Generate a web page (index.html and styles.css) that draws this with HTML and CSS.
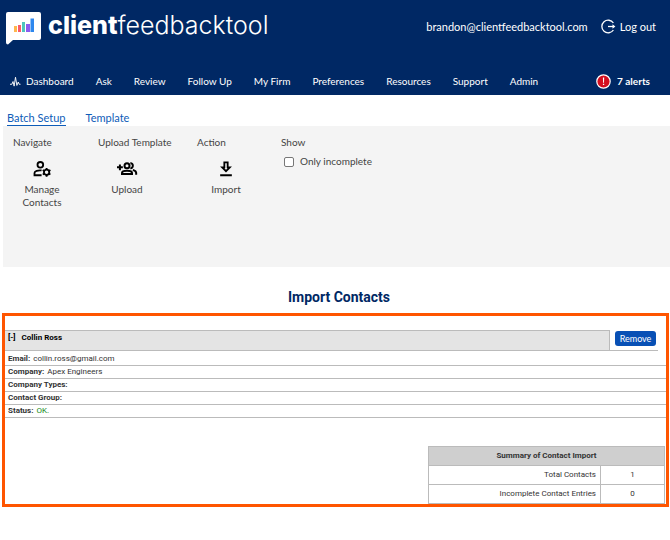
FILE: index.html
```html
<!DOCTYPE html>
<html lang="en">
<head>
<meta charset="utf-8">
<title>Import Contacts</title>
<link rel="stylesheet" href="styles.css">
</head>
<body>
<header class="site-header">
  <div class="top">
    <a class="brand" href="#">
      <svg class="brand-mark" viewBox="0 0 36 34" aria-hidden="true">
        <path fill="#fff" d="M2 1h31q2 0 2 2v24q0 2-2 2H7l-5 4.500q-2 0-2-2V3q0-2 2-2z"/>
        <path fill="#ffb64d" d="M8 15h3v6H8z"/><path fill="#fb5a68" d="M12 14h3v7h-3z"/><path fill="#4fc5bd" d="M16 11h3v10h-3z"/><path fill="#8a5cf0" d="M20 13h4v8h-4z"/><path fill="#2d87ee" d="M24.500 7.500H28V21h-3.500z"/>
      </svg>
      <span class="brand-name"><b>client</b>feedbacktool</span>
    </a>
    <div class="account">
      <span>brandon@clientfeedbacktool.com</span>
      <a class="logout" href="#">
        <svg width="15" height="15" viewBox="0 0 15 15" fill="none" stroke="#fff" stroke-width="1.3" aria-hidden="true"><path d="M12.4 4A6.3 6.3 0 1 0 12.4 11"/><path d="M7 7.5h6"/><path fill="#fff" stroke="none" d="M11.5 5.3 14.4 7.5 11.5 9.7z"/></svg>
        Log out
      </a>
    </div>
  </div>
  <nav class="nav">
    <a class="dash" href="#"><svg width="11" height="12" viewBox="0 0 12 12" fill="none" stroke="#fff" aria-hidden="true"><path d="M0 8.5h2l1.3-3L4.500 10.500 6 .8l1.500 9L9 6l1 2.500h1.500"/></svg>Dashboard</a>
    <a href="#">Ask</a><a href="#">Review</a><a href="#">Follow Up</a><a href="#">My Firm</a><a href="#">Preferences</a><a href="#">Resources</a><a href="#">Support</a><a href="#">Admin</a>
    <a class="alerts" href="#"><svg width="15" height="15" viewBox="0 0 15 15" aria-hidden="true"><circle cx="7.500" cy="7.500" r="6.700" fill="#d40f20" stroke="#fff" stroke-width="1.200"/><path fill="#fff" d="M6.900 3.500h1.300L8 8.700h-.9zM6.900 9.800h1.300V11H6.900z"/></svg>7 alerts</a>
  </nav>
</header>
<main>
  <div class="tabs"><a class="current" href="#">Batch Setup</a><a href="#">Template</a></div>
  <section class="ribbon">
    <div class="group navigate"><h2>Navigate</h2>
      <a class="tool" href="#">
        <svg width="20" height="20" viewBox="0 0 24 24" fill="none" stroke="#000" stroke-width="2.200" aria-hidden="true"><circle cx="10" cy="7" r="3.400"/><path d="M11.500 19.500H3v-2.700C3 14.500 7 13.200 11.500 13.700"/><circle cx="17.500" cy="16" r="3.200"/><path d="M17.500 10.700v2M17.500 19.300v2M12.900 13.300l1.700 1M20.400 17.700l1.700 1M12.900 18.700l1.700-1M20.400 14.300l1.700-1"/></svg>
        Manage Contacts</a></div>
    <div class="group upload"><h2>Upload Template</h2>
      <a class="tool" href="#">
        <svg width="22" height="20" viewBox="0 0 26 24" fill="none" stroke="#000" stroke-width="2.400" aria-hidden="true"><path d="M1 10h7M4.500 6.500v7"/><circle cx="13" cy="8" r="3"/><path d="M7 18v-1.300c0-3.600 12-3.600 12 0V18zM17 5c4-.5 4 6.500 0 6M20 13c2.500.8 4 2 4 3.500V19"/></svg>
        Upload</a></div>
    <div class="group action"><h2>Action</h2>
      <a class="tool" href="#">
        <svg width="20" height="20" viewBox="0 0 24 24" fill="none" stroke="#000" stroke-width="2.200" aria-hidden="true"><path d="M10 4h4v6h2.500L12 14.500 7.500 10H10zM5 19.500h14"/></svg>
        Import</a></div>
    <div class="group"><h2>Show</h2>
      <label class="check"><input type="checkbox">Only incomplete</label></div>
  </section>
  <h1>Import Contacts</h1>
  <section class="results">
    <div class="contact-head">
      <div class="contact-name"><a href="#">[-]</a><span>Collin Ross</span></div>
      <div class="contact-action"><button type="button">Remove</button></div>
    </div>
    <dl class="details">
      <div class="email"><dt>Email:</dt><dd>collin.ross@gmail.com</dd></div>
      <div><dt>Company:</dt><dd>Apex Engineers</dd></div>
      <div><dt>Company Types:</dt><dd></dd></div>
      <div><dt>Contact Group:</dt><dd></dd></div>
      <div><dt>Status:</dt><dd class="ok">OK.</dd></div>
    </dl>
    <table class="summary">
      <thead><tr><th colspan="2">Summary of Contact Import</th></tr></thead>
      <tbody>
        <tr><td>Total Contacts</td><td class="count">1</td></tr>
        <tr><td>Incomplete Contact Entries</td><td class="count">0</td></tr>
      </tbody>
    </table>
  </section>
</main>
</body>
</html>
```
FILE: styles.css
```css
* { box-sizing: border-box; }
body { margin: 0; background: #fff; color: #444; font: 10px/13px Lato, "Noto Sans", sans-serif; }
a { color: inherit; text-decoration: none; }
svg { flex: none; }
.site-header { height: 95px; background: #002864; color: #fff; }
.top { display: flex; justify-content: space-between; height: 68px; padding: 11px 14px 0 6px; }
.brand { display: flex; align-items: flex-start; gap: 6px; }
.brand-mark { width: 36px; height: 34px; }
.brand-name { font: 300 25px/28px Inter, sans-serif; }
.brand-name b { font-weight: 800; }
.account { display: flex; align-items: center; gap: 13px; height: 30px; font-size: 11px; }
.logout { display: flex; align-items: center; gap: 4px; }
.nav { display: flex; align-items: center; gap: 22px; height: 27px; padding: 0 20px 0 10px; white-space: nowrap; }
.dash { display: flex; align-items: center; gap: 5px; }
.alerts { display: flex; align-items: center; gap: 6px; margin-left: auto; font-weight: 700; }
.tabs { display: flex; gap: 20px; padding: 16px 7px 0; color: #0e5cb8; font-size: 11px; }
.tabs a { height: 15px; line-height: 14px; }
.tabs .current { border-bottom: 1px solid #0e5cb8; }
.ribbon { display: flex; min-height: 141px; margin-left: 3px; padding: 10px; background: #f4f4f4; }
.ribbon h2 { margin: 0; font-size: 10px; font-weight: 400; }
.navigate { flex: 0 0 85px; }
.upload { flex: 0 0 99px; }
.action { flex: 0 0 84px; }
.tool { display: flex; flex-direction: column; align-items: center; gap: 4px; width: 58px; padding-top: 10px; text-align: center; }
.check { display: flex; align-items: center; gap: 6px; padding: 6px 3px; }
.check input { appearance: none; width: 10px; height: 10px; margin: 0; border: 1px solid #777; border-radius: 2px; background: #fff; }
h1 { margin: 22px 0 7px; padding-left: 8px; color: #002864; font: 700 14px/17px Roboto, sans-serif; text-align: center; }
.results { margin: 0 1px 0 2px; padding: 14px 0 0; border: 3px solid #ff5500; color: #333; font: 8px/12px Roboto, sans-serif; }
.contact-head { display: flex; margin-right: 8px; border-bottom: 1px solid #bbb; }
.contact-name { display: flex; flex: 1; gap: 6px; height: 20px; padding: 1px 3px; border: solid #bbb; border-width: 1px 1px 0 0; background: #e4e4e4; color: #000; font-weight: 700; }
.contact-action { width: 48px; padding: 1px 0 0 5px; }
button { width: 41px; height: 15px; padding: 0; border: 0; border-radius: 3px; background: #0850b5; color: #fff; font: 9px/13px Lato, "Noto Sans", sans-serif; }
.details { margin: 0; }
.details div { display: flex; gap: 3px; padding-left: 3px; border-bottom: 1px solid #bbb; }
.details .email { padding-top: 2px; }
dt { font-weight: 700; }
dd { margin: 0; }
.ok { color: #168a16; }
.summary { width: 237px; margin: 28px 1px 0 auto; border-collapse: collapse; }
.summary th, .summary td { height: 19px; padding: 0 4px; border: 1px solid #bbb; text-align: right; }
.summary th { background: #cfcfcf; text-align: center; }
.summary .count { width: 64px; text-align: center; }
```
